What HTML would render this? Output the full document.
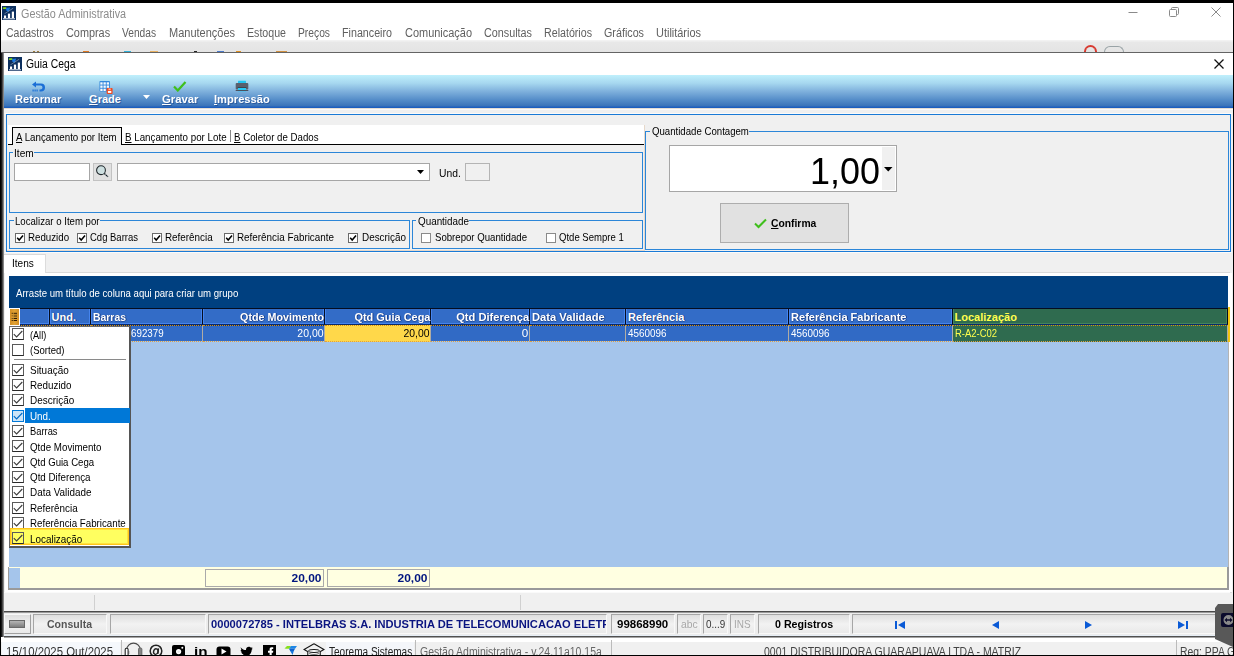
<!DOCTYPE html>
<html lang="pt-BR">
<head>
<meta charset="utf-8">
<title>Gestão Administrativa - Guia Cega</title>
<style>
*{box-sizing:border-box;margin:0;padding:0}
html,body{width:1234px;height:656px;overflow:hidden;background:#fff}
body{position:relative;font-family:"Liberation Sans",sans-serif;font-size:11px;color:#000}
.a{position:absolute}
.t{position:absolute;white-space:nowrap;line-height:1}
.bl{position:absolute;border:1px solid #2b86d8}
.inp{position:absolute;background:#fff;border:1px solid #a6a6a6}
.cb{position:absolute;width:10px;height:10px;background:#fff;border:1px solid #6a6a6a}
.cb svg,.pc svg{position:absolute;left:0;top:0}
.hd{position:absolute;top:308px;height:17px;background:#336cc7;border:1px solid #050d20;border-bottom-color:#0a2a6a;box-shadow:inset 1px 0 0 #4584ee,inset -1px -1px 0 #4584ee}
.cell{position:absolute;top:325px;height:17px;background:#316ac5;background-clip:padding-box;border-right:1px solid #b0aca4;border-bottom:1px dotted #e0a040;border-top:1px dotted #d8900c}
.pc{position:absolute;left:12px;width:12px;height:12px;border:1px solid #5a5a5a;border-bottom-color:#2a2a2a;background:#fff}
.sb{position:absolute;top:614px;height:20px;border:1px solid;border-color:#a6a6a6 #f8f8f8 #f8f8f8 #a6a6a6;background:linear-gradient(#dedede,#f2f2f2 50%,#e9e9e9)}
.hs{text-shadow:1px 0 0 rgba(10,30,90,.55),0 1px 0 rgba(10,30,90,.35)}
.sh{text-shadow:1px 1px 0 rgba(20,60,130,.55)}
</style>
</head>
<body>
<div class="a" style="left:1px;top:3px;width:1232px;height:38px;background:#fff"></div>
<div class="a" style="left:1px;top:40px;width:1232px;height:12px;background:linear-gradient(#f4f4f4 0,#f0f0f0 1px,#e8e8e8 2.500px,#e4e4e4 100%)"></div>
<div class="a" style="left:1px;top:52px;width:1232px;height:1px;background:#646464"></div>
<svg class="a" style="left:2px;top:6px" width="14" height="14" viewBox="0 0 14 14"><rect width="14" height="14" fill="#0c2f5e"/><rect x="0.800" y="1.200" width="3.800" height="1.800" rx="0.800" fill="#86d81e"/><path d="M3.800 2L8.200 1.400L6.800 5.800L4.600 5Z" fill="#1878e0"/><path d="M2.500 7.800L11.200 2.200" stroke="#7890ac" stroke-width="0.800"/><rect x="2" y="9.500" width="2.100" height="2.600" fill="#fff"/><rect x="5.900" y="7.600" width="2.200" height="4.500" fill="#fff"/><rect x="9.800" y="5.600" width="2.200" height="6.500" fill="#fff"/><rect x="1" y="12.300" width="12" height="1" fill="#e8eef5"/></svg>
<div class="t" id="tt" style="top:8px;font-size:12px;color:#8c8c8c;left:20.9px;transform-origin:0 50%;transform:scaleX(0.9005);">Gestão Administrativa</div>
<svg class="a" style="left:1120px;top:3px" width="112" height="22" viewBox="0 0 112 22"><g stroke="#8a8a8a" stroke-width="1" fill="none"><path d="M8.500 9.500H17.500"/><rect x="49.500" y="6.500" width="7" height="7" rx="1"/><path d="M51.500 6.500V5.500a1 1 0 0 1 1-1h5a1 1 0 0 1 1 1v5a1 1 0 0 1-1 1h-1"/><path d="M91.500 4.500l9 9M100.500 4.500l-9 9"/></g></svg>
<div class="t" id="m0" style="top:27px;font-size:12px;color:#606060;left:6.0px;transform-origin:0 50%;transform:scaleX(0.8720);">Cadastros</div>
<div class="t" id="m1" style="top:27px;font-size:12px;color:#606060;left:66.0px;transform-origin:0 50%;transform:scaleX(0.9058);">Compras</div>
<div class="t" id="m2" style="top:27px;font-size:12px;color:#606060;left:122.0px;transform-origin:0 50%;transform:scaleX(0.8515);">Vendas</div>
<div class="t" id="m3" style="top:27px;font-size:12px;color:#606060;left:168.5px;transform-origin:0 50%;transform:scaleX(0.9161);">Manutenções</div>
<div class="t" id="m4" style="top:27px;font-size:12px;color:#606060;left:246.5px;transform-origin:0 50%;transform:scaleX(0.8854);">Estoque</div>
<div class="t" id="m5" style="top:27px;font-size:12px;color:#606060;left:297.5px;transform-origin:0 50%;transform:scaleX(0.8565);">Preços</div>
<div class="t" id="m6" style="top:27px;font-size:12px;color:#606060;left:341.5px;transform-origin:0 50%;transform:scaleX(0.8924);">Financeiro</div>
<div class="t" id="m7" style="top:27px;font-size:12px;color:#606060;left:404.5px;transform-origin:0 50%;transform:scaleX(0.9131);">Comunicação</div>
<div class="t" id="m8" style="top:27px;font-size:12px;color:#606060;left:483.5px;transform-origin:0 50%;transform:scaleX(0.8993);">Consultas</div>
<div class="t" id="m9" style="top:27px;font-size:12px;color:#606060;left:543.5px;transform-origin:0 50%;transform:scaleX(0.8884);">Relatórios</div>
<div class="t" id="m10" style="top:27px;font-size:12px;color:#606060;left:603.5px;transform-origin:0 50%;transform:scaleX(0.8951);">Gráficos</div>
<div class="t" id="m11" style="top:27px;font-size:12px;color:#606060;left:655.5px;transform-origin:0 50%;transform:scaleX(0.9120);">Utilitários</div>
<div class="a" style="left:1084px;top:45px;width:13px;height:7px;border:2px solid #d83a30;border-bottom:0;border-radius:7px 7px 0 0"></div>
<div class="a" style="left:1104px;top:46px;width:20px;height:6px;border:1px solid #99a3a6;border-bottom:0;border-radius:10px 10px 0 0"></div>
<div class="a" style="left:33px;top:51px;width:2px;height:1px;background:#9a7a3a"></div>
<div class="a" style="left:37px;top:51px;width:2px;height:1px;background:#9a7a3a"></div>
<div class="a" style="left:83px;top:51px;width:6px;height:1px;background:#e07820"></div>
<div class="a" style="left:124px;top:51px;width:7px;height:1px;background:#30b0d8"></div>
<div class="a" style="left:150px;top:51px;width:8px;height:1px;background:#e8b060"></div>
<div class="a" style="left:194px;top:51px;width:3px;height:1px;background:#222"></div>
<div class="a" style="left:217px;top:51px;width:7px;height:1px;background:#4a78c8"></div>
<div class="a" style="left:236px;top:51px;width:5px;height:1px;background:#e09020"></div>
<div class="a" style="left:276px;top:51px;width:11px;height:1px;background:#d09040"></div>
<div class="a" style="left:1px;top:53px;width:4px;height:584px;background:linear-gradient(90deg,#161616 0,#161616 1px,#484848 1px,#484848 2px,#858585 2px,#858585 3px,#cfcfd4 3px)"></div>
<div class="a" style="left:4px;top:53px;width:1229px;height:559px;background:#f0f0f0"></div>
<div class="a" style="left:4px;top:53px;width:1229px;height:23px;background:#fff"></div>
<svg class="a" style="left:7.5px;top:56.5px" width="14" height="14" viewBox="0 0 14 14"><rect width="14" height="14" fill="#0c2f5e"/><rect x="0.800" y="1.200" width="3.800" height="1.800" rx="0.800" fill="#86d81e"/><path d="M3.800 2L8.200 1.400L6.800 5.800L4.600 5Z" fill="#1878e0"/><path d="M2.500 7.800L11.200 2.200" stroke="#7890ac" stroke-width="0.800"/><rect x="2" y="9.500" width="2.100" height="2.600" fill="#fff"/><rect x="5.900" y="7.600" width="2.200" height="4.500" fill="#fff"/><rect x="9.800" y="5.600" width="2.200" height="6.500" fill="#fff"/><rect x="1" y="12.300" width="12" height="1" fill="#e8eef5"/></svg>
<div class="t" id="gc" style="top:58px;font-size:12px;left:26.0px;transform-origin:0 50%;transform:scaleX(0.8627);">Guia Cega</div>
<svg class="a" style="left:1212px;top:57px" width="14" height="14" viewBox="0 0 14 14"><path d="M2.500 2.500l9 9M11.500 2.500l-9 9" stroke="#111" stroke-width="1.300" fill="none"/></svg>
<div class="a" id="tb" style="left:4px;top:75px;width:1229px;height:33px;background:linear-gradient(#c0f0fc 0%,#a6d7ef 25%,#7eb0dc 50%,#558dc9 75%,#3a73b9 94%,#1c5ebe 97%,#1c5ebe 100%)"></div>
<div class="a" style="left:4px;top:108px;width:1229px;height:1px;background:#e4ddd4"></div>
<div class="t sh" id="b0" style="top:94px;font-size:11px;font-weight:bold;color:#fff;left:14.8px;transform-origin:0 50%;transform:scaleX(1.0121);">Retornar</div>
<div class="t sh" id="b1" style="top:94px;font-size:11px;font-weight:bold;color:#fff;left:89.1px;transform-origin:0 50%;"><u>G</u>rade</div>
<div class="t sh" id="b2" style="top:94px;font-size:11px;font-weight:bold;color:#fff;left:161.7px;transform-origin:0 50%;transform:scaleX(1.0286);"><u>G</u>ravar</div>
<div class="t sh" id="b3" style="top:94px;font-size:11px;font-weight:bold;color:#fff;left:213.8px;transform-origin:0 50%;transform:scaleX(1.0119);"><u>I</u>mpressão</div>
<svg class="a" style="left:31px;top:81px" width="14" height="12" viewBox="0 0 14 12"><path d="M5 0.500L1 3.500L5 6.500V4.500H9.500a2 2 0 0 1 0 4H8.500V10.500H10a4 4 0 0 0 0-8H5Z" fill="#1b6fd6"/><path d="M1.500 8.500h1.200v2h-1.200zM3.500 8.500h1.200v2h-1.200zM5.500 8.500h1.200v2h-1.200z" fill="#1b6fd6"/></svg>
<svg class="a" style="left:99px;top:81px" width="14" height="13" viewBox="0 0 14 13"><rect x="0.500" y="0" width="10.400" height="10.400" rx="0.800" fill="#3388dc"/><g fill="#f4f9fe"><rect x="1.3" y="1.3" width="2.300" height="2.300"/><rect x="4.5" y="1.3" width="2.300" height="2.300"/><rect x="7.7" y="1.3" width="2.300" height="2.300"/><rect x="1.3" y="4.5" width="2.300" height="2.300"/><rect x="4.5" y="4.5" width="2.300" height="2.300"/><rect x="7.7" y="4.5" width="2.300" height="2.300"/><rect x="1.3" y="7.7" width="2.300" height="2.300"/><rect x="4.5" y="7.7" width="2.300" height="2.300"/></g><rect x="7.600" y="7" width="6" height="6" rx="1" fill="#f04a20"/><rect x="8.900" y="9.900" width="3.400" height="2" fill="#fff"/><rect x="9.500" y="7.600" width="2.200" height="1.200" fill="#ffd0c0"/></svg>
<svg class="a" style="left:143px;top:95px" width="8" height="5" viewBox="0 0 8 5"><path d="M0 0H7L3.500 4Z" fill="#fff"/></svg>
<svg class="a" style="left:173px;top:81px" width="14" height="11" viewBox="0 0 14 11"><path d="M1 5.500L4.800 9.500L12.500 1" stroke="#3fbf1c" stroke-width="2.200" fill="none"/></svg>
<svg class="a" style="left:235px;top:80px" width="14" height="12" viewBox="0 0 14 12"><rect x="3" y="0.800" width="8" height="2.700" rx="0.500" fill="#22c4f0"/><rect x="0.700" y="3" width="12.600" height="6.500" rx="1" fill="#58606e"/><rect x="3" y="7.800" width="8" height="3.600" fill="#28c8f4"/><rect x="2.600" y="7" width="8.800" height="1" fill="#3c4450"/><rect x="0.700" y="10" width="12.600" height="1" fill="#4a5260"/></svg>
<div class="a" style="left:4px;top:109px;width:1229px;height:1px;background:#fafafa"></div>
<div class="a" style="left:5px;top:252px;width:1227px;height:1px;background:#fbfbfb"></div>
<div class="a" style="left:5px;top:113px;width:1227px;height:1px;background:#fbfbfb"></div>
<div class="bl" style="left:6px;top:114px;width:1225px;height:138px;border-color:#1a7ad6"></div>
<div class="a" style="left:7px;top:250px;width:638px;height:1px;background:#e6d8ca"></div>
<div class="a" style="left:644px;top:125px;width:1px;height:126px;background:#e6d8ca"></div>
<div class="a" style="left:8px;top:125px;width:636px;height:19px;background:#fff"></div>
<div class="a" style="left:8px;top:144px;width:636px;height:1px;background:#000"></div>
<div class="a" style="left:12px;top:127px;width:110px;height:18px;background:#f0f0f0;border:1px solid #000;border-bottom:0"></div>
<div class="a" style="left:230px;top:130px;width:1px;height:12px;background:#888"></div>
<div class="t" id="tab0" style="top:132px;font-size:11px;left:15.5px;transform-origin:0 50%;transform:scaleX(0.8853);"><u>A</u> Lançamento por Item</div>
<div class="t" id="tab1" style="top:132px;font-size:11px;left:124.9px;transform-origin:0 50%;transform:scaleX(0.8883);"><u>B</u> Lançamento por Lote</div>
<div class="t" id="tab2" style="top:132px;font-size:11px;left:234.3px;transform-origin:0 50%;transform:scaleX(0.8801);"><u>B</u> Coletor de Dados</div>
<div class="bl" style="left:9px;top:152px;width:634px;height:61px"></div>
<div class="a" style="left:13px;top:151px;width:21px;height:3px;background:#f0f0f0"></div>
<div class="t" id="gi" style="top:148px;font-size:11px;left:13.8px;transform-origin:0 50%;transform:scaleX(0.9203);">Item</div>
<div class="inp" style="left:14px;top:163px;width:76px;height:18px"></div>
<div class="a" style="left:93px;top:163px;width:19px;height:18px;background:#e1e1e1;border:1px solid #c2c2c2"></div>
<svg class="a" style="left:95px;top:164px" width="16" height="16" viewBox="0 0 16 16"><circle cx="6" cy="6.200" r="4.400" fill="#cddfe0" stroke="#20282c" stroke-width="1.050"/><path d="M9.300 9.500L13 12.800" stroke="#16242c" stroke-width="1.300" stroke-dasharray="1.600 0.500"/></svg>
<div class="inp" style="left:117px;top:163px;width:313px;height:18px"></div>
<svg class="a" style="left:417px;top:170px" width="8" height="5" viewBox="0 0 8 5"><path d="M0 0H7L3.500 4Z" fill="#000"/></svg>
<div class="t" id="und" style="top:168px;font-size:11px;left:439.3px;transform-origin:0 50%;transform:scaleX(0.9376);">Und.</div>
<div class="a" style="left:465px;top:163px;width:25px;height:18px;background:#f0f0f0;border:1px solid #b4b4b4"></div>
<div class="bl" style="left:9px;top:220px;width:401px;height:29px"></div>
<div class="a" style="left:14px;top:219px;width:86px;height:3px;background:#f0f0f0"></div>
<div class="t" id="gl" style="top:216px;font-size:11px;left:15.0px;transform-origin:0 50%;transform:scaleX(0.8747);">Localizar o Item por</div>
<div class="cb" style="left:14.5px;top:232.5px"><svg width="8" height="8" viewBox="0 0 8 8"><path d="M1.200 3.800L3.200 6L7 1.500" stroke="#000" stroke-width="1.500" fill="none"/></svg></div>
<div class="t" id="c0" style="top:232px;font-size:11px;left:28.3px;transform-origin:0 50%;transform:scaleX(0.8842);">Reduzido</div>
<div class="cb" style="left:77px;top:232.5px"><svg width="8" height="8" viewBox="0 0 8 8"><path d="M1.200 3.800L3.200 6L7 1.500" stroke="#000" stroke-width="1.500" fill="none"/></svg></div>
<div class="t" id="c1" style="top:232px;font-size:11px;left:90.3px;transform-origin:0 50%;transform:scaleX(0.8627);">Cdg Barras</div>
<div class="cb" style="left:151.5px;top:232.5px"><svg width="8" height="8" viewBox="0 0 8 8"><path d="M1.200 3.800L3.200 6L7 1.500" stroke="#000" stroke-width="1.500" fill="none"/></svg></div>
<div class="t" id="c2" style="top:232px;font-size:11px;left:164.8px;transform-origin:0 50%;transform:scaleX(0.8966);">Referência</div>
<div class="cb" style="left:224px;top:232.5px"><svg width="8" height="8" viewBox="0 0 8 8"><path d="M1.200 3.800L3.200 6L7 1.500" stroke="#000" stroke-width="1.500" fill="none"/></svg></div>
<div class="t" id="c3" style="top:232px;font-size:11px;left:236.5px;transform-origin:0 50%;transform:scaleX(0.8962);">Referência Fabricante</div>
<div class="cb" style="left:348px;top:232.5px"><svg width="8" height="8" viewBox="0 0 8 8"><path d="M1.200 3.800L3.200 6L7 1.500" stroke="#000" stroke-width="1.500" fill="none"/></svg></div>
<div class="t" id="c4" style="top:232px;font-size:11px;left:361.5px;transform-origin:0 50%;transform:scaleX(0.8997);">Descrição</div>
<div class="bl" style="left:412px;top:220px;width:231px;height:29px"></div>
<div class="a" style="left:416px;top:219px;width:53px;height:3px;background:#f0f0f0"></div>
<div class="t" id="gq" style="top:216px;font-size:11px;left:417.5px;transform-origin:0 50%;transform:scaleX(0.8965);">Quantidade</div>
<div class="cb" style="left:420.5px;top:232.5px;border-color:#8a8a8a"></div>
<div class="t" id="c5" style="top:232px;font-size:11px;left:434.5px;transform-origin:0 50%;transform:scaleX(0.8746);">Sobrepor Quantidade</div>
<div class="cb" style="left:545.5px;top:232.5px;border-color:#8a8a8a"></div>
<div class="t" id="c6" style="top:232px;font-size:11px;left:558.8px;transform-origin:0 50%;transform:scaleX(0.8674);">Qtde Sempre 1</div>
<div class="bl" style="left:645px;top:131px;width:584px;height:119px"></div>
<div class="a" style="left:650px;top:130px;width:99px;height:3px;background:#f0f0f0"></div>
<div class="t" id="gqc" style="top:126px;font-size:11px;left:652.0px;transform-origin:0 50%;transform:scaleX(0.8754);">Quantidade Contagem</div>
<div class="inp" style="left:669px;top:145px;width:228px;height:47px"></div>
<div class="a" style="left:882px;top:147px;width:13px;height:43px;background:#f0f0f0"></div>
<svg class="a" style="left:884px;top:167px" width="9" height="5" viewBox="0 0 9 5"><path d="M0 0H8.500L4.250 4.500Z" fill="#000"/></svg>
<div class="t" id="qv" style="top:153px;font-size:37px;right:354.3px;transform-origin:100% 50%;transform:scaleX(0.9706);">1,00</div>
<div class="a" style="left:720px;top:203px;width:129px;height:40px;background:#e1e1e1;border:1px solid #adadad"></div>
<svg class="a" style="left:754px;top:218px" width="13" height="11" viewBox="0 0 13 11"><path d="M1 5.500L4.500 9L12 1.500" stroke="#3fbf1c" stroke-width="2" fill="none"/></svg>
<div class="t" id="conf" style="top:218px;font-size:11px;font-weight:bold;left:771.2px;transform-origin:0 50%;transform:scaleX(0.9379);"><u>C</u>onfirma</div>
<div class="a" style="left:4px;top:254px;width:42px;height:19px;background:#fff;border-top:1px solid #d9d9d9;border-right:1px solid #dcdcdc"></div>
<div class="a" style="left:46px;top:272px;width:1184px;height:1px;background:#d9d9d9"></div>
<div class="t" id="itens" style="top:258px;font-size:11px;left:11.7px;transform-origin:0 50%;transform:scaleX(0.9137);">Itens</div>
<div class="a" style="left:5px;top:273px;width:1227px;height:320px;background:#fff;border-bottom:1px solid #dcdcdc"></div>
<div class="a" style="left:9px;top:276px;width:1219px;height:313px;background:#a5c5eb"></div>
<div class="a" style="left:9px;top:325px;width:1219px;height:1px;background:#10306e"></div>
<div class="a" style="left:1228px;top:342px;width:1px;height:226px;background:#b4b4b4"></div>
<div class="a" style="left:9px;top:276px;width:1219px;height:32px;background:#004080"></div>
<div class="t" id="arr" style="top:288px;font-size:11px;color:#fff;left:15.7px;transform-origin:0 50%;transform:scaleX(0.8740);">Arraste um título de coluna aqui para criar um grupo</div>
<div class="hd" style="left:8px;width:42px"></div>
<div class="cell" style="left:9px;width:41px"></div>
<div class="hd" style="left:49px;width:42px"></div>
<div class="cell" style="left:50px;width:41px"></div>
<div class="hd" style="left:90px;width:113px"></div>
<div class="cell" style="left:91px;width:112px"></div>
<div class="hd" style="left:202px;width:123px"></div>
<div class="cell" style="left:203px;width:122px"></div>
<div class="hd" style="left:324px;width:107px"></div>
<div class="cell" style="left:325px;width:106px;background:#ffd84a"></div>
<div class="hd" style="left:430px;width:100px"></div>
<div class="cell" style="left:431px;width:99px"></div>
<div class="hd" style="left:529px;width:97px"></div>
<div class="cell" style="left:530px;width:96px"></div>
<div class="hd" style="left:625px;width:164px"></div>
<div class="cell" style="left:626px;width:163px"></div>
<div class="hd" style="left:788px;width:165px"></div>
<div class="cell" style="left:789px;width:164px"></div>
<div class="hd" style="left:952px;width:276px;background:#2f6b4f;box-shadow:inset 1px 0 0 #45845d,inset -1px -1px 0 #45845d"></div>
<div class="cell" style="left:953px;width:275px;background:#2f6b4f"></div>
<div class="t hs" id="h1" style="top:312px;font-size:11px;font-weight:bold;color:#fff;left:51.5px;transform-origin:0 50%;">Und.</div>
<div class="t hs" id="h2" style="top:312px;font-size:11px;font-weight:bold;color:#fff;left:92.5px;transform-origin:0 50%;transform:scaleX(0.9467);">Barras</div>
<div class="t hs" id="h3" style="top:312px;font-size:11px;font-weight:bold;color:#fff;right:910.3px;transform-origin:100% 50%;transform:scaleX(0.9760);">Qtde Movimento</div>
<div class="t hs" id="h4" style="top:312px;font-size:11px;font-weight:bold;color:#fff;right:804.0px;transform-origin:100% 50%;transform:scaleX(0.9947);">Qtd Guia Cega</div>
<div class="t hs" id="h5" style="top:312px;font-size:11px;font-weight:bold;color:#fff;right:705.0px;transform-origin:100% 50%;transform:scaleX(1.0119);">Qtd Diferença</div>
<div class="t hs" id="h6" style="top:312px;font-size:11px;font-weight:bold;color:#fff;left:532.3px;transform-origin:0 50%;transform:scaleX(1.0161);">Data Validade</div>
<div class="t hs" id="h7" style="top:312px;font-size:11px;font-weight:bold;color:#fff;left:628.1px;transform-origin:0 50%;">Referência</div>
<div class="t hs" id="h8" style="top:312px;font-size:11px;font-weight:bold;color:#fff;left:791.0px;transform-origin:0 50%;transform:scaleX(1.0049);">Referência Fabricante</div>
<div class="t" id="h9" style="top:312px;font-size:11px;font-weight:bold;color:#ffff4d;left:954.5px;transform-origin:0 50%;">Localização</div>
<div class="t" id="v2" style="top:328px;font-size:11px;color:#fff;left:92.5px;transform-origin:0 50%;transform:scaleX(0.8877);">7896637692379</div>
<div class="t" id="v3" style="top:328px;font-size:11px;color:#fff;right:910.3px;transform-origin:100% 50%;transform:scaleX(0.9516);">20,00</div>
<div class="t" id="v4" style="top:328px;font-size:11px;color:#000;right:804.0px;transform-origin:100% 50%;transform:scaleX(0.9444);">20,00</div>
<div class="t" id="v5" style="top:328px;font-size:11px;color:#fff;right:705.5px;transform-origin:100% 50%;transform:scaleX(1.0612);">0</div>
<div class="t" id="v7" style="top:328px;font-size:11px;color:#fff;left:628.1px;transform-origin:0 50%;transform:scaleX(0.8966);">4560096</div>
<div class="t" id="v8" style="top:328px;font-size:11px;color:#fff;left:791.0px;transform-origin:0 50%;transform:scaleX(0.8989);">4560096</div>
<div class="t" id="v9" style="top:328px;font-size:11px;color:#ffff4d;left:954.5px;transform-origin:0 50%;transform:scaleX(0.8588);">R-A2-C02</div>
<div class="a" style="left:8px;top:308px;width:1px;height:18px;background:#fff"></div>
<div class="a" style="left:9px;top:308px;width:11px;height:18px;background:linear-gradient(90deg,#d48f24,#e0a234 50%,#d48f24);border:1px solid #fff"></div>
<svg class="a" style="left:11px;top:312px" width="7" height="10" viewBox="0 0 7 10"><g fill="#2e1c04"><rect x="0.700" y="0.800" width="1.100" height="1"/><rect x="2.600" y="0.800" width="3.400" height="1"/><rect x="0.700" y="3.300" width="1.100" height="1" opacity=".55"/><rect x="2.600" y="2.600" width="3.400" height="2.600" opacity=".45"/><rect x="0.700" y="6" width="1.100" height="1" opacity=".7"/><rect x="2.600" y="6" width="3.400" height="1"/><rect x="0.700" y="8" width="1.100" height="1"/><rect x="2.600" y="8" width="3.400" height="1"/></g></svg>
<div class="a" style="left:1228px;top:307px;width:2px;height:35px;background:#f2c40f"></div>
<div class="a" style="left:8px;top:567px;width:1221px;height:23px;background:#ffffe1;border:2px solid #9a9a9a;border-top:0;border-left-width:1px"></div>
<div class="a" style="left:9px;top:568px;width:11px;height:20px;background:#a5c5eb"></div>
<div class="a" style="left:205px;top:569px;width:119px;height:18px;border:1px solid #aaa;background:#ffffe1"></div>
<div class="a" style="left:327px;top:569px;width:103px;height:18px;border:1px solid #aaa;background:#ffffe1"></div>
<div class="t" id="f0" style="top:573px;font-size:11px;font-weight:bold;color:#00157f;right:912.5px;transform-origin:100% 50%;transform:scaleX(1.0897);">20,00</div>
<div class="t" id="f1" style="top:573px;font-size:11px;font-weight:bold;color:#00157f;right:806.5px;transform-origin:100% 50%;transform:scaleX(1.0897);">20,00</div>
<div class="a" style="left:9px;top:326px;width:122px;height:222px;background:#fff;border:1px solid #6a6a6a;border-right:2px solid #555;border-bottom:2px solid #555"></div>
<div class="a" style="left:14px;top:359px;width:112px;height:1px;background:#8a8a8a"></div>
<div class="pc" style="top:328px"><svg width="10" height="10" viewBox="0 0 10 10"><path d="M0.800 5.200L3.600 8L9.300 2" stroke="#3c3c3c" stroke-width="1.100" fill="none"/></svg></div>
<div class="t" id="p0" style="top:330px;font-size:11px;left:30.0px;transform-origin:0 50%;transform:scaleX(0.8281);">(All)</div>
<div class="pc" style="top:344px"></div>
<div class="t" id="p1" style="top:345px;font-size:11px;left:30.0px;transform-origin:0 50%;transform:scaleX(0.8679);">(Sorted)</div>
<div class="pc" style="top:364px"><svg width="10" height="10" viewBox="0 0 10 10"><path d="M0.800 5.200L3.600 8L9.300 2" stroke="#3c3c3c" stroke-width="1.100" fill="none"/></svg></div>
<div class="t" id="p2" style="top:365px;font-size:11px;left:30.0px;transform-origin:0 50%;transform:scaleX(0.9039);">Situação</div>
<div class="pc" style="top:379px"><svg width="10" height="10" viewBox="0 0 10 10"><path d="M0.800 5.200L3.600 8L9.300 2" stroke="#3c3c3c" stroke-width="1.100" fill="none"/></svg></div>
<div class="t" id="p3" style="top:380px;font-size:11px;left:30.0px;transform-origin:0 50%;transform:scaleX(0.8928);">Reduzido</div>
<div class="pc" style="top:394px"><svg width="10" height="10" viewBox="0 0 10 10"><path d="M0.800 5.200L3.600 8L9.300 2" stroke="#3c3c3c" stroke-width="1.100" fill="none"/></svg></div>
<div class="t" id="p4" style="top:395px;font-size:11px;left:30.0px;transform-origin:0 50%;transform:scaleX(0.9038);">Descrição</div>
<div class="a" style="left:25px;top:408px;width:105px;height:15px;background:#0078d7"></div>
<div class="pc" style="top:410px;background:#cce4f7;border-color:#0078d7"><svg width="10" height="10" viewBox="0 0 10 10"><path d="M0.800 5.200L3.600 8L9.300 2" stroke="#0068c4" stroke-width="1.100" fill="none"/></svg></div>
<div class="t" id="p5" style="top:411px;font-size:11px;color:#fff;left:30.0px;transform-origin:0 50%;transform:scaleX(0.8946);">Und.</div>
<div class="pc" style="top:425px"><svg width="10" height="10" viewBox="0 0 10 10"><path d="M0.800 5.200L3.600 8L9.300 2" stroke="#3c3c3c" stroke-width="1.100" fill="none"/></svg></div>
<div class="t" id="p6" style="top:426px;font-size:11px;left:30.0px;transform-origin:0 50%;transform:scaleX(0.8486);">Barras</div>
<div class="pc" style="top:440px"><svg width="10" height="10" viewBox="0 0 10 10"><path d="M0.800 5.200L3.600 8L9.300 2" stroke="#3c3c3c" stroke-width="1.100" fill="none"/></svg></div>
<div class="t" id="p7" style="top:442px;font-size:11px;left:30.0px;transform-origin:0 50%;transform:scaleX(0.8860);">Qtde Movimento</div>
<div class="pc" style="top:456px"><svg width="10" height="10" viewBox="0 0 10 10"><path d="M0.800 5.200L3.600 8L9.300 2" stroke="#3c3c3c" stroke-width="1.100" fill="none"/></svg></div>
<div class="t" id="p8" style="top:457px;font-size:11px;left:30.0px;transform-origin:0 50%;transform:scaleX(0.8736);">Qtd Guia Cega</div>
<div class="pc" style="top:471px"><svg width="10" height="10" viewBox="0 0 10 10"><path d="M0.800 5.200L3.600 8L9.300 2" stroke="#3c3c3c" stroke-width="1.100" fill="none"/></svg></div>
<div class="t" id="p9" style="top:472px;font-size:11px;left:30.0px;transform-origin:0 50%;transform:scaleX(0.8913);">Qtd Diferença</div>
<div class="pc" style="top:486px"><svg width="10" height="10" viewBox="0 0 10 10"><path d="M0.800 5.200L3.600 8L9.300 2" stroke="#3c3c3c" stroke-width="1.100" fill="none"/></svg></div>
<div class="t" id="p10" style="top:487px;font-size:11px;left:30.0px;transform-origin:0 50%;transform:scaleX(0.8990);">Data Validade</div>
<div class="pc" style="top:502px"><svg width="10" height="10" viewBox="0 0 10 10"><path d="M0.800 5.200L3.600 8L9.300 2" stroke="#3c3c3c" stroke-width="1.100" fill="none"/></svg></div>
<div class="t" id="p11" style="top:503px;font-size:11px;left:30.0px;transform-origin:0 50%;transform:scaleX(0.8966);">Referência</div>
<div class="pc" style="top:517px"><svg width="10" height="10" viewBox="0 0 10 10"><path d="M0.800 5.200L3.600 8L9.300 2" stroke="#3c3c3c" stroke-width="1.100" fill="none"/></svg></div>
<div class="t" id="p12" style="top:518px;font-size:11px;left:30.0px;transform-origin:0 50%;transform:scaleX(0.8851);">Referência Fabricante</div>
<div class="a" style="left:10px;top:528px;width:119px;height:17px;background:#ffff60;border:1px solid #ffc61a;box-shadow:inset 0 0 0 1px rgba(255,214,50,.7)"></div>
<div class="pc" style="top:532px;background:transparent"><svg width="10" height="10" viewBox="0 0 10 10"><path d="M0.800 5.200L3.600 8L9.300 2" stroke="#3c3c3c" stroke-width="1.100" fill="none"/></svg></div>
<div class="t" id="p13" style="top:534px;font-size:11px;left:30.0px;transform-origin:0 50%;transform:scaleX(0.8985);">Localização</div>
<div class="a" style="left:4px;top:592px;width:1226px;height:1px;background:#fafafa"></div>
<div class="a" style="left:94px;top:595px;width:1px;height:15px;background:#d0d0d0"></div>
<div class="a" style="left:520px;top:595px;width:1px;height:15px;background:#d0d0d0"></div>
<div class="a" style="left:4px;top:611px;width:1229px;height:2px;background:linear-gradient(#4a4a4a 0,#4a4a4a 1px,#9a9a9a 1px)"></div>
<div class="a" style="left:4px;top:613px;width:1229px;height:24px;background:#ececec"></div>
<div class="sb" style="left:4px;width:27px;border-color:#f8f8f8 #a0a0a0 #a0a0a0 #f8f8f8"></div>
<div class="sb" style="left:33px;width:74px"></div>
<div class="sb" style="left:110px;width:96px"></div>
<div class="sb" style="left:208px;width:399px"></div>
<div class="sb" style="left:611px;width:64px"></div>
<div class="sb" style="left:677px;width:24px"></div>
<div class="sb" style="left:703px;width:25px"></div>
<div class="sb" style="left:730px;width:25px"></div>
<div class="sb" style="left:758px;width:92px"></div>
<div class="sb" style="left:852px;width:364px"></div>
<div class="a" style="left:9px;top:620px;width:16px;height:8px;background:linear-gradient(#b5b5b5,#7d7d7d);border:1px solid #6a6a6a"></div>
<div class="t" id="s0" style="top:619px;font-size:11px;font-weight:bold;color:#555;left:47.2px;transform-origin:0 50%;transform:scaleX(0.9562);">Consulta</div>
<div class="a" style="left:0;top:0;width:606px;height:656px;overflow:hidden">
<div class="t" id="s1" style="top:619px;font-size:11px;font-weight:bold;color:#0a1480;left:210.5px;transform-origin:0 50%;transform:scaleX(1.0122);"><span id="s1f">0000072785 - INTELBRAS S.A. INDUSTRIA DE TELECOMUNICACAO ELET</span>RONICA</div>
</div>
<div class="t" id="s2" style="top:619px;font-size:11px;font-weight:bold;left:617.1px;transform-origin:0 50%;transform:scaleX(1.0459);">99868990</div>
<div class="t" id="s3" style="top:619px;font-size:11px;color:#a8a8a8;left:680.5px;transform-origin:0 50%;transform:scaleX(0.9408);">abc</div>
<div class="t" id="s4" style="top:619px;font-size:11px;color:#333;left:706.3px;transform-origin:0 50%;transform:scaleX(0.8969);">0...9</div>
<div class="t" id="s5" style="top:619px;font-size:11px;color:#a8a8a8;left:733.9px;transform-origin:0 50%;transform:scaleX(0.9049);">INS</div>
<div class="t" id="s6" style="top:619px;font-size:11px;font-weight:bold;left:775.4px;transform-origin:0 50%;transform:scaleX(0.9696);">0 Registros</div>
<svg class="a" style="left:895px;top:621px" width="10" height="8" viewBox="0 0 10 8"><g fill="#0a5ad6"><rect x="0" y="0" width="2" height="8" /><path d="M10 0V8L3 4Z"/></g></svg>
<svg class="a" style="left:991px;top:621px" width="10" height="8" viewBox="0 0 10 8"><g fill="#0a5ad6"><path d="M8 0V8L1 4Z"/></g></svg>
<svg class="a" style="left:1084px;top:621px" width="10" height="8" viewBox="0 0 10 8"><g fill="#0a5ad6"><path d="M1 0V8L8 4Z"/></g></svg>
<svg class="a" style="left:1178px;top:621px" width="10" height="8" viewBox="0 0 10 8"><g fill="#0a5ad6"><rect x="8" y="0" width="2" height="8" /><path d="M0 0V8L7 4Z"/></g></svg>
<div class="a" style="left:4px;top:635px;width:1229px;height:3px;background:linear-gradient(#e6eef6 0,#e6eef6 1px,#505050 1px,#505050 2px,#a4a4a4 2px)"></div>
<div class="a" style="left:1px;top:638px;width:1232px;height:18px;background:linear-gradient(#fff 0,#fff 4px,#f0f0f0 4px)"></div>
<div class="a" style="left:2px;top:642px;width:118px;height:14px;background:#f5f8fc"></div>
<div class="a" style="left:326px;top:642px;width:88px;height:14px;background:#f4f6fa"></div>
<svg class="a" style="left:124px;top:642px" width="19" height="14" viewBox="0 0 19 14"><path d="M2.700 12V8a6.800 6.800 0 0 1 13.600 0v4" fill="none" stroke="#4a4a4a" stroke-width="1.200"/><path d="M5 12V9" stroke="#aaa" stroke-width="1"/><rect x="1.200" y="6.300" width="2.900" height="8" rx="1.200" fill="#fff" stroke="#222" stroke-width="1.100"/><rect x="14.500" y="6" width="3.400" height="8" rx="1.200" fill="#858585" stroke="#5a5a5a" stroke-width="0.800"/></svg>
<svg class="a" style="left:149px;top:644px" width="14" height="12" viewBox="0 0 14 12"><circle cx="7" cy="7" r="5.800" fill="none" stroke="#222" stroke-width="1.500"/><ellipse cx="6.800" cy="7.600" rx="2.200" ry="2.800" fill="none" stroke="#222" stroke-width="1.400" transform="rotate(15 6.800 7.600)"/><path d="M9.500 4.300L8.800 10" stroke="#222" stroke-width="1.400"/></svg>
<svg class="a" style="left:172px;top:645px" width="13" height="11" viewBox="0 0 13 11"><rect x="0" y="0" width="13" height="13" rx="2" fill="#000"/><circle cx="6.600" cy="6.600" r="2.600" fill="#fff"/><circle cx="6.600" cy="6.600" r="1.200" fill="#e8e8e8"/><circle cx="10.300" cy="2.700" r="1" fill="#fff"/></svg>
<svg class="a" style="left:216px;top:646px" width="15" height="10" viewBox="0 0 15 10"><rect x="0.500" y="0.500" width="14" height="11" rx="3" fill="#000"/><path d="M5.500 2.500V8.500L10.500 5.500Z" fill="#fff"/></svg>
<svg class="a" style="left:240px;top:646px" width="13" height="10" viewBox="0 0 13 10"><path d="M0.500 1.200C2.200 3.200 4.200 4 6 4C5.800 2 7.500 0.500 9.300 0.800C10 0.900 10.500 1.300 10.900 1.700L12.500 1.200L11.700 2.600L12.800 2.800L11.700 3.700C11.900 7 9.500 10 5.500 10.500H2L3.500 8.500C2 8 1 6.500 1.500 5.500L0.500 5L1.300 3.500Z" fill="#000"/></svg>
<svg class="a" style="left:263px;top:645px" width="13" height="11" viewBox="0 0 13 11"><rect width="13" height="12" fill="#000"/><path d="M9.800 2.200H8.600C7.300 2.200 6.600 3 6.600 4.300V5.800H5V7.800H6.600V12H8.700V7.800H10L10.300 5.800H8.700V4.700C8.700 4.200 8.900 4 9.400 4H10.200V2.300Z" fill="#fff"/></svg>
<svg class="a" style="left:284px;top:645px" width="14" height="11" viewBox="0 0 14 11"><path d="M0.500 3.500L3 1H7L5 3.700H2.500Z" fill="#86e01c"/><path d="M7 1H13L11 3.700H5Z" fill="#1e86e6"/><path d="M5 3.700H11L9.800 6H6.200Z" fill="#0f62cc"/><path d="M6.200 6H9.800L8.600 10Z" fill="#1676dc"/></svg>
<svg class="a" style="left:303px;top:643px" width="22" height="13" viewBox="0 0 22 13"><path d="M11 0.800L21 6.500L17 8.800M5 8.800L1 6.500L11 0.800" fill="none" stroke="#111" stroke-width="1.100"/><path d="M4.800 8.500V13H17.200V8.500" fill="#fff" stroke="#111" stroke-width="1.100"/><ellipse cx="11" cy="8" rx="5.600" ry="1.500" fill="#fff" stroke="#111" stroke-width="1"/><path d="M6 10.500Q11 12.500 16 10.500" stroke="#777" stroke-width="1.200" fill="none"/></svg>
<div class="t" id="d0" style="top:646px;font-size:12px;color:#333;left:5.8px;transform-origin:0 50%;transform:scaleX(0.9489);">15/10/2025 Out/2025</div>
<div class="t" id="d1" style="top:646px;font-size:12px;color:#222;left:329.1px;transform-origin:0 50%;transform:scaleX(0.8372);">Teorema Sistemas</div>
<div class="t" id="d2" style="top:646px;font-size:12px;color:#666;left:419.5px;transform-origin:0 50%;transform:scaleX(0.8726);">Gestão Administrativa - v.24.11a10.15a</div>
<div class="t" id="d3" style="top:646px;font-size:12px;color:#444;left:764.1px;transform-origin:0 50%;transform:scaleX(0.8730);">0001 DISTRIBUIDORA GUARAPUAVA LTDA - MATRIZ</div>
<div class="t" id="d4" style="top:646px;font-size:12px;color:#444;left:1179.8px;transform-origin:0 50%;transform:scaleX(0.8650);">Reg: PPA G</div>
<div class="t" id="lk" style="top:645px;font-size:13px;font-weight:bold;left:194.3px;transform-origin:0 50%;transform:scaleX(1.1762);">in</div>
<div class="a" style="left:121px;top:640px;width:1px;height:16px;background:#bbb"></div>
<div class="a" style="left:415px;top:640px;width:1px;height:16px;background:#bbb"></div>
<div class="a" style="left:611px;top:640px;width:1px;height:16px;background:#bbb"></div>
<div class="a" style="left:1176px;top:640px;width:1px;height:16px;background:#bbb"></div>
<svg class="a" style="left:1215px;top:604px" width="18" height="44" viewBox="0 0 18 44"><path d="M0 4L3 0H18V43L0 35Z" fill="#585858"/><rect x="6" y="9" width="14" height="14" rx="2" fill="#0b0b2c"/><circle cx="13.500" cy="16" r="5" fill="#8a8a8a"/><path d="M9.500 16L12 13.800V15.300H15V13.800L17.500 16L15 18.200V16.700H12V18.200Z" fill="#0b0b2c"/></svg>
<div class="a" style="left:0;top:0;width:1234px;height:3px;background:#000"></div>
<div class="a" style="left:0;top:0;width:1px;height:656px;background:#000"></div>
<div class="a" style="left:0;top:655px;width:1234px;height:1px;background:#000"></div>
<div class="a" style="left:1233px;top:0;width:1px;height:656px;background:#000"></div>
</body>
</html>
